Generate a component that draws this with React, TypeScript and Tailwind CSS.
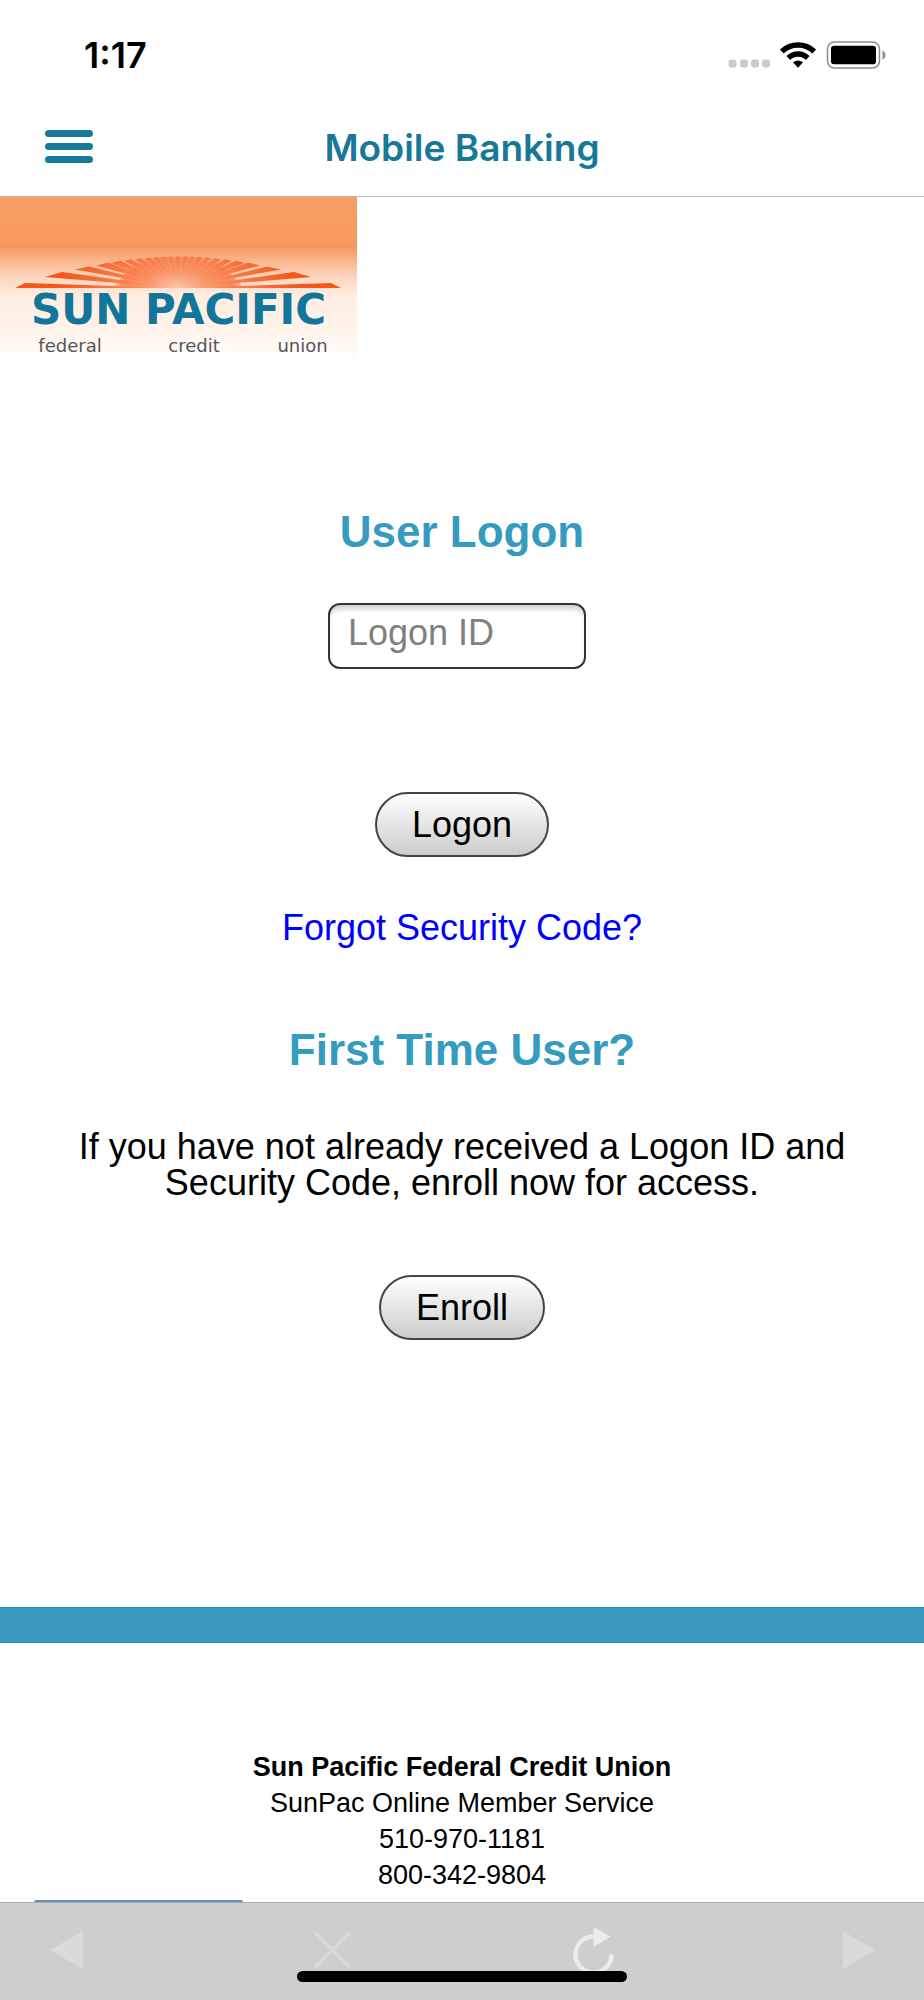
import React from "react";

// One side of the sun: the outer edge of each ray, from the horizon upwards.
const RAY_EDGES: [number, number, number, number][] = [
  [15, 91, 25, 86],
  [45, 80, 62, 75],
  [75, 72.5, 89, 69.5],
  [96, 68.5, 108, 65.5],
  [111, 66, 120, 63.5],
  [124, 64, 131, 62],
  [135, 62.5, 141, 61],
  [145, 61.3, 150, 60.4],
  [153.5, 60.5, 158, 60],
  [161.5, 60, 165, 59.6],
  [168.5, 59.6, 172, 59.5],
];

const LEFT_RAYS = RAY_EDGES.map(([x1, y1, x2, y2]) => `178,91 ${x1},${y1} ${x2},${y2}`);

function SunArt() {
  return (
    <svg className="absolute inset-0 h-full w-full" viewBox="0 0 357 168" aria-hidden="true">
      <defs>
        <radialGradient
          id="glow"
          cx="0"
          cy="0"
          r="160"
          gradientUnits="userSpaceOnUse"
          gradientTransform="translate(178 91) scale(1 0.5)"
        >
          <stop offset="0" stopColor="#fbc3a2" />
          <stop offset="0.25" stopColor="#f98b5c" />
          <stop offset="0.5" stopColor="#f8703b" />
          <stop offset="0.75" stopColor="#f4561b" />
          <stop offset="1" stopColor="#f4561b" />
        </radialGradient>
        <radialGradient
          id="core"
          cx="0"
          cy="0"
          r="72"
          gradientUnits="userSpaceOnUse"
          gradientTransform="translate(178 91) scale(1 0.55)"
        >
          <stop offset="0" stopColor="#fdccb0" />
          <stop offset="0.35" stopColor="#fa9a70" />
          <stop offset="0.75" stopColor="#f98a5a" />
          <stop offset="1" stopColor="#f98a5a" stopOpacity="0" />
        </radialGradient>
        <g id="rays">
          {LEFT_RAYS.map((points) => (
            <polygon key={points} points={points} fill="url(#glow)" />
          ))}
        </g>
      </defs>
      <path d="M112 91 L138 62 Q178 57 218 62 L244 91 Z" fill="url(#core)" />
      <use href="#rays" />
      <use href="#rays" transform="translate(356 0) scale(-1 1)" />
      <polygon points="178,91 176,59.5 180,59.5" fill="url(#glow)" />
    </svg>
  );
}

function Logo() {
  return (
    <div className="relative h-[168px] w-[357px] bg-[linear-gradient(to_bottom,#f99d63_0,#f99b60_42px,#f8965a_50px,#fab78e_64px,#fdd5be_80px,#feede2_100px,#fff4ec_136px,#ffffff_168px)]">
      <SunArt />
      <div className="relative flex h-full flex-col px-2 pt-[88px]">
        <div className="text-center font-['DejaVu_Sans'] text-[42px] leading-[50px] font-bold text-[#12759a]">
          SUN PACIFIC
        </div>
        <div className="grid grid-cols-[4fr_4fr_3fr] text-center font-['DejaVu_Sans'] text-lg leading-[22px] text-[#555555]">
          <span>federal</span>
          <span>credit</span>
          <span>union</span>
        </div>
      </div>
    </div>
  );
}

function StatusIcons() {
  return (
    <svg className="h-7 w-40" viewBox="0 0 160 28" aria-hidden="true">
      <g fill="#cacaca">
        <rect x="0.5" y="18.5" width="8" height="8" rx="3" />
        <rect x="12" y="18.5" width="8" height="8" rx="3" />
        <rect x="23" y="18.5" width="8" height="8" rx="3" />
        <rect x="34" y="18.5" width="8" height="8" rx="3" />
      </g>
      <g fill="none" stroke="#000" strokeWidth="5.5">
        <path d="M53.8 10.6 A23.5 23.5 0 0 1 86.2 10.6" />
        <path d="M60.3 17 A14 14 0 0 1 79.7 17" />
      </g>
      <path d="M65 21.2 Q70 17.8 75 21.2 L70 26.8 Z" fill="#000" />
      <rect x="99.5" y="1" width="52" height="26" rx="7" fill="none" stroke="#8c8c8c" strokeWidth="1.5" />
      <rect x="103" y="4.7" width="45" height="18.6" rx="3" fill="#000" />
      <path d="M154.5 9.5 Q157.5 11 157.5 14 Q157.5 17 154.5 18.5 Z" fill="#8c8c8c" />
    </svg>
  );
}

function PillButton({ children }: { children: React.ReactNode }) {
  return (
    <button
      type="button"
      className="h-[65px] rounded-full border-2 border-[#444444] bg-linear-to-b from-white to-[#cccccc] px-[35px] text-4xl text-black"
    >
      {children}
    </button>
  );
}

export default function App() {
  return (
    <div className="flex min-h-screen flex-col bg-white font-['Liberation_Sans',Arial,sans-serif] text-black">
      <header className="border-b border-[#b9b9b9] font-['Inter',sans-serif]">
        <div className="flex h-24 items-center justify-between pt-3.5 pr-9 pl-[84px]">
          <time className="text-4xl leading-10 font-semibold">1:17</time>
          <StatusIcons />
        </div>
        <div className="grid h-[100px] grid-cols-[1fr_auto_1fr] items-center px-[45px]">
          <button type="button" aria-label="Menu" className="flex w-12 flex-col gap-1.5">
            <span className="h-[7px] rounded-full bg-[#187897]" />
            <span className="h-[7px] rounded-full bg-[#187897]" />
            <span className="h-[7px] rounded-full bg-[#187897]" />
          </button>
          <h1 className="pt-1 text-[37px] leading-10 font-semibold text-[#187897]">Mobile Banking</h1>
        </div>
      </header>

      <main className="flex flex-1 flex-col">
        <Logo />
        <form className="mt-[143px] flex flex-col items-center" onSubmit={(e) => e.preventDefault()}>
          <h2 className="text-[44px] leading-12 font-bold text-[#359bbf]">User Logon</h2>
          <input
            type="text"
            aria-label="Logon ID"
            placeholder="Logon ID"
            className="mt-[47px] mr-2.5 h-[66px] w-[258px] rounded-xl border-2 border-[#333333] bg-white px-[18px] pb-1.5 text-4xl shadow-[inset_0_6px_5px_-2px_#cfcfcf] placeholder:text-[#808080]"
          />
          <div className="mt-[123px] flex">
            <PillButton>Logon</PillButton>
          </div>
          <a href="#forgot" className="mt-[51px] text-4xl text-[#0000ff]">
            Forgot Security Code?
          </a>
        </form>

        <section className="mt-[78px] flex flex-col items-center">
          <h2 className="text-[44px] leading-12 font-bold text-[#359bbf]">First Time User?</h2>
          <p className="mt-[55px] max-w-[800px] text-center text-4xl leading-9">
            If you have not already received a Logon ID and Security Code, enroll now for access.
          </p>
          <div className="mt-[74px] flex">
            <PillButton>Enroll</PillButton>
          </div>
        </section>

        <footer className="mt-[267px]">
          <div className="h-9 border-y border-[#1f8db5] bg-[#3a9abf]" />
          <address className="mt-[106px] text-center text-[27px] leading-9 not-italic">
            <strong className="block">Sun Pacific Federal Credit Union</strong>
            <span className="block">SunPac Online Member Service</span>
            <span className="block">510-970-1181</span>
            <span className="block">800-342-9804</span>
          </address>
          <div className="mt-[7px] ml-[34px] h-0.5 w-[209px] rounded-t-full bg-[#6090bb]" />
        </footer>
      </main>

      <nav className="relative grid h-[98px] grid-cols-[1fr_auto_1fr] border-t border-[#adadad] bg-[#cecece]">
        <div className="flex h-[94px] items-center justify-between pl-[50px]">
          <button type="button" aria-label="Back">
            <svg className="h-10 w-[33px]" viewBox="0 0 33 40" aria-hidden="true">
              <path d="M33 1 V39 L0 20 Z" fill="#dadada" />
            </svg>
          </button>
          <button type="button" aria-label="Stop">
            <svg className="h-9 w-[37px]" viewBox="0 0 37 36" aria-hidden="true">
              <path d="M1 0.5 L36 35.5 M36 0.5 L1 35.5" stroke="#dadada" strokeWidth="3" />
            </svg>
          </button>
        </div>
        <div className="w-[222px]" />
        <div className="flex h-[94px] items-center justify-between pr-[49px]">
          <button type="button" aria-label="Reload">
            <svg className="h-[46px] w-[42px]" viewBox="0 0 42 46" aria-hidden="true">
              <path d="M20.5 9.5 A18 18 0 1 0 38.5 27.5" fill="none" stroke="#ececec" strokeWidth="4.5" />
              <path d="M20.5 0 V20 L37.5 9.5 Z" fill="#ececec" />
            </svg>
          </button>
          <button type="button" aria-label="Forward">
            <svg className="h-10 w-8" viewBox="0 0 32 40" aria-hidden="true">
              <path d="M0 1 V39 L32 20 Z" fill="#dadada" />
            </svg>
          </button>
        </div>
        <div className="absolute bottom-[18px] left-1/2 h-[11px] w-[330px] -translate-x-1/2 rounded-full bg-black" />
      </nav>
    </div>
  );
}
